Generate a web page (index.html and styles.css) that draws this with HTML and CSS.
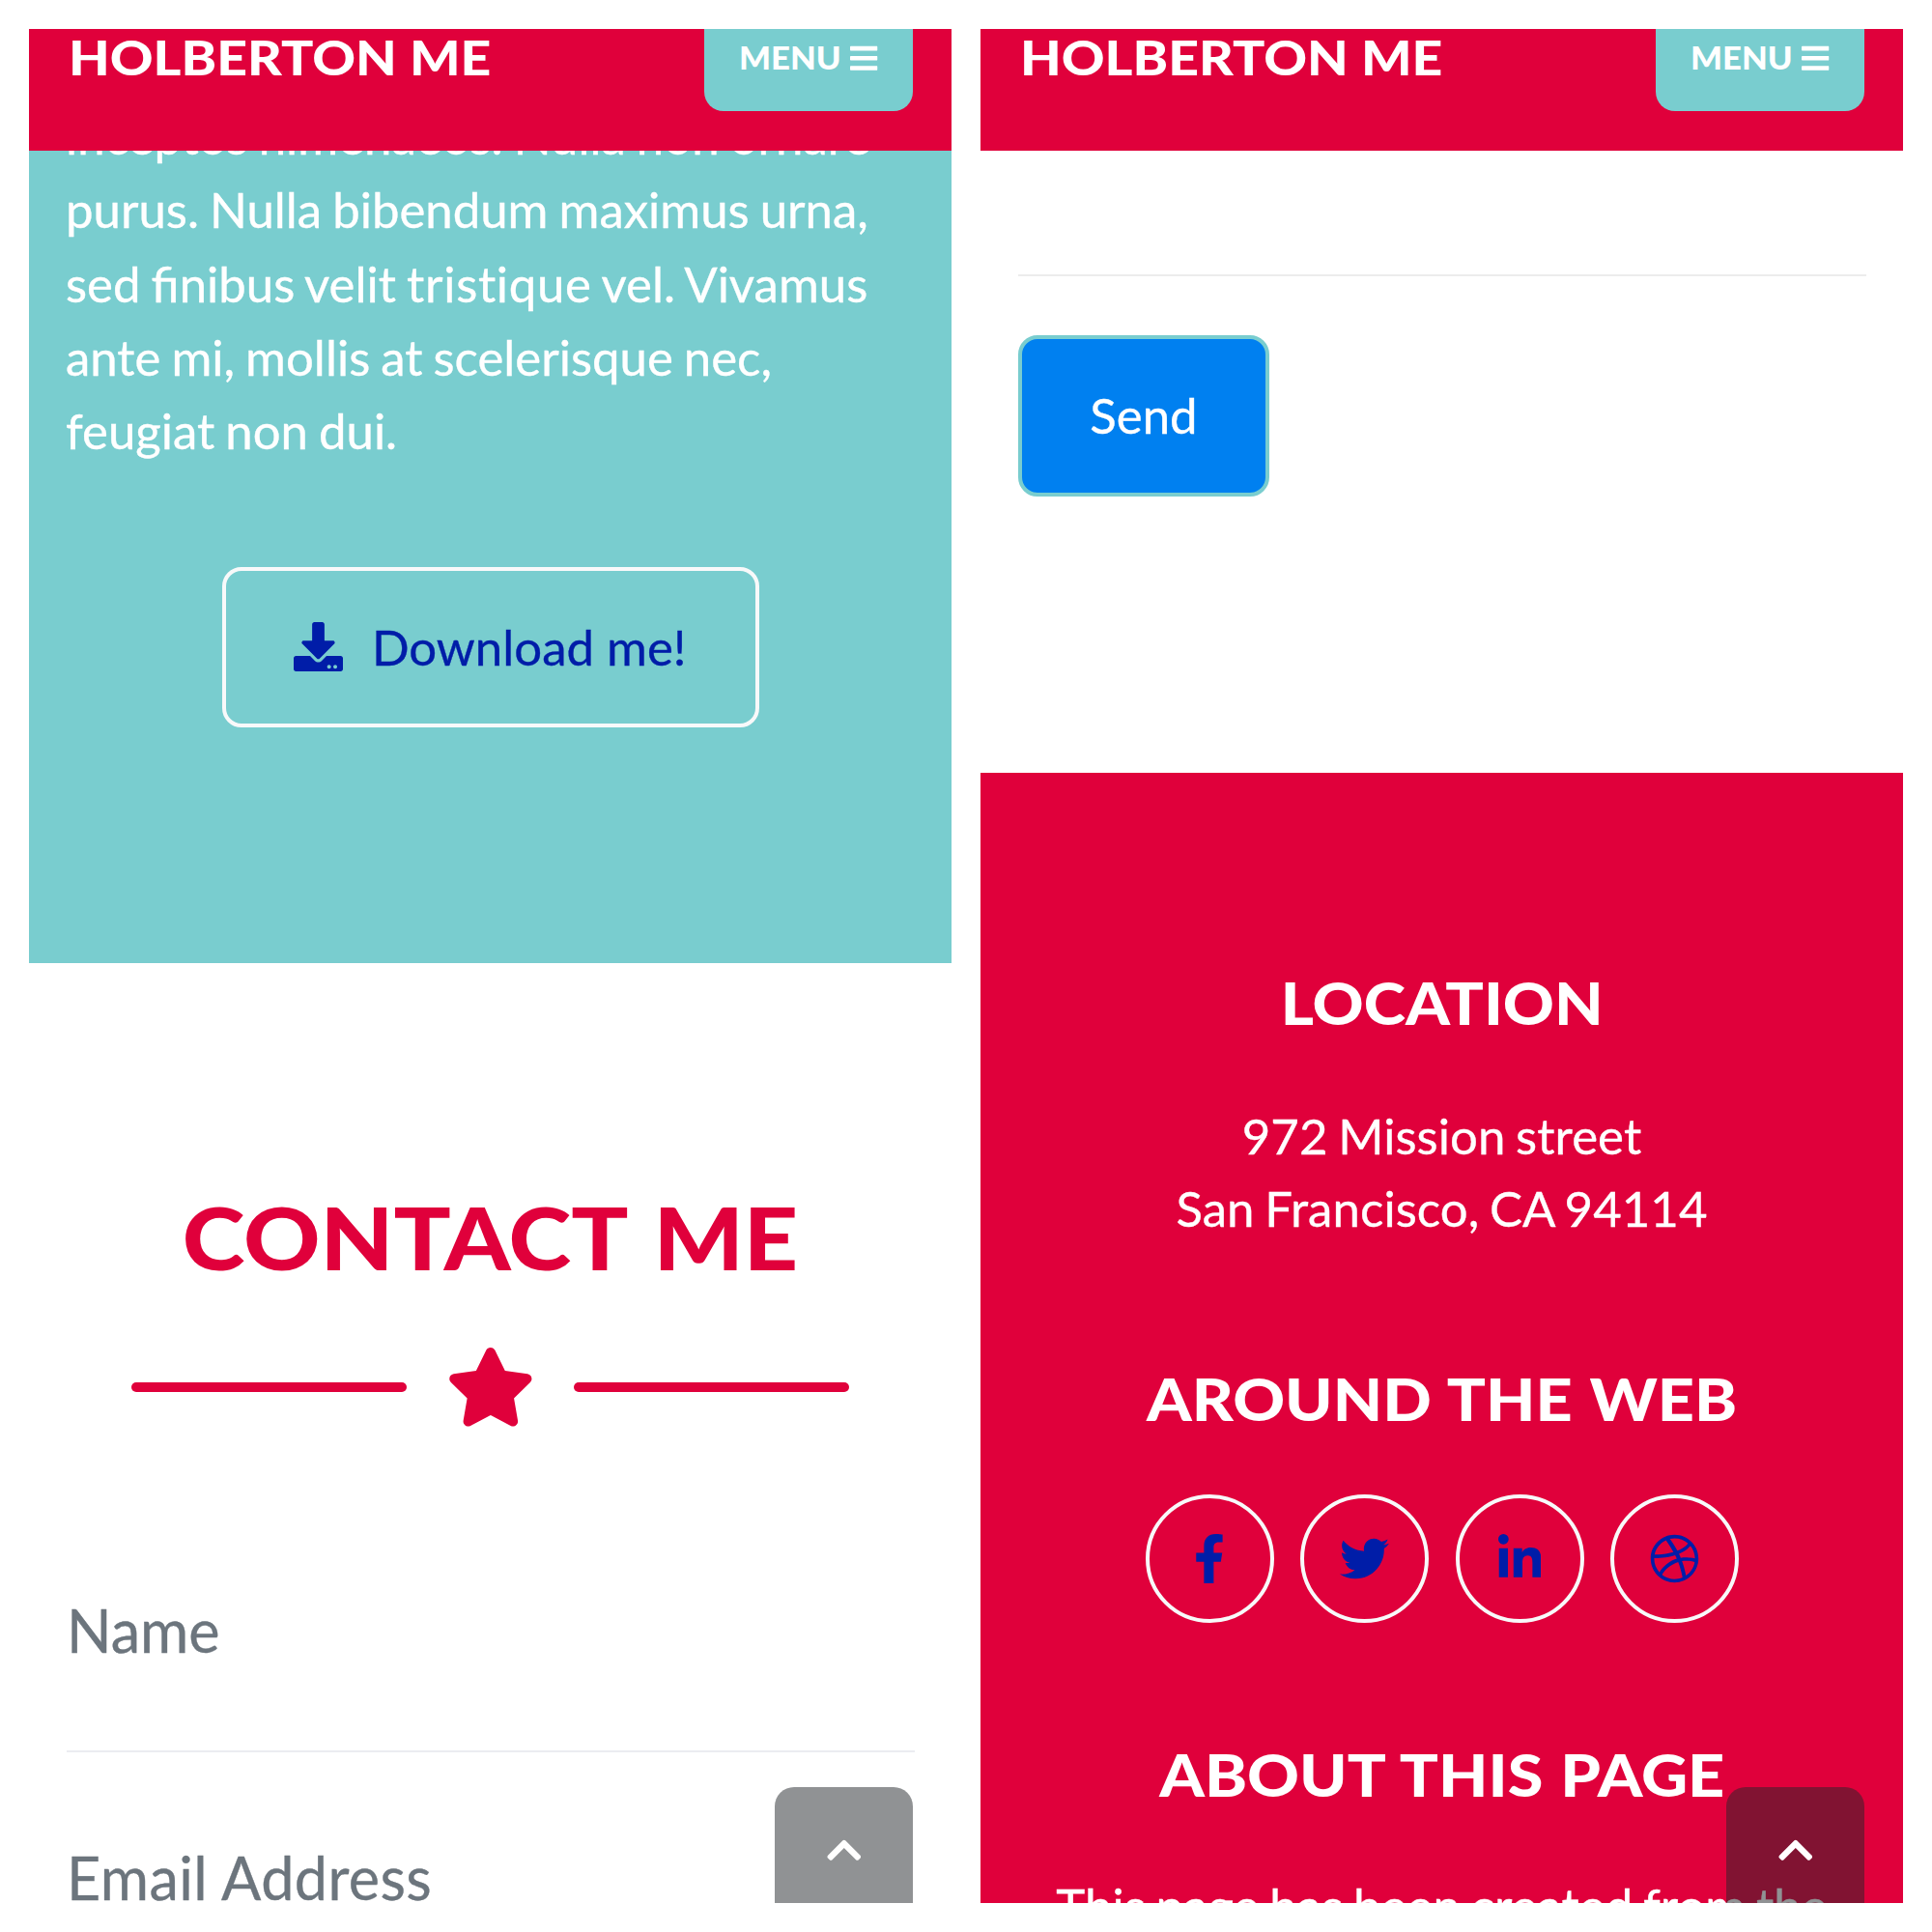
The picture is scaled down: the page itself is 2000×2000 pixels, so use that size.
FILE: index.html
```
<!DOCTYPE html>
<html lang="en">
<head>
<meta charset="utf-8">
<title>Holberton Me</title>
<link rel="stylesheet" href="styles.css">
</head>
<body>
<svg class="defs" aria-hidden="true">
  <symbol id="bars" viewBox="0 0 448 512"><path d="M16 132h416c8.8 0 16-7.2 16-16V76c0-8.8-7.2-16-16-16H16C7.2 60 0 67.200 0 76v40c0 8.800 7.200 16 16 16zm0 160h416c8.800 0 16-7.200 16-16v-40c0-8.800-7.200-16-16-16H16c-8.800 0-16 7.200-16 16v40c0 8.800 7.200 16 16 16zm0 160h416c8.800 0 16-7.200 16-16v-40c0-8.800-7.200-16-16-16H16c-8.800 0-16 7.200-16 16v40c0 8.800 7.200 16 16 16z"/></symbol>
  <symbol id="chevron" viewBox="0 0 448 512"><path d="M240.971 130.524l194.343 194.343c9.373 9.373 9.373 24.569 0 33.941l-22.667 22.667c-9.357 9.357-24.522 9.375-33.901.04L224 227.495 69.255 381.516c-9.379 9.335-24.544 9.317-33.901-.04l-22.667-22.667c-9.373-9.373-9.373-24.569 0-33.941L207.03 130.525c9.372-9.373 24.568-9.373 33.941-.001z"/></symbol>
</svg>
<main class="screens">
  <article class="screen">
    <header class="navbar">
      <a class="brand"><span>HOLBERTON ME</span></a>
      <button class="menu"><span>MENU</span><svg><use href="#bars"/></svg></button>
    </header>
    <section class="about">
      <p>inceptos himenaeos. Nulla non ornare<br>purus. Nulla bibendum maximus urna,<br>sed finibus velit <span class="no-liga">tristique</span> vel. Vivamus<br>ante mi, mollis at scelerisque nec,<br>feugiat non dui.</p>
      <a class="download">
        <svg viewBox="0 0 512 512"><path d="M216 0h80c13.3 0 24 10.700 24 24v168h87.700c17.800 0 26.700 21.500 14.100 34.100L269.700 378.300c-7.500 7.500-19.800 7.500-27.300 0L90.100 226.100c-12.600-12.600-3.700-34.100 14.100-34.100H192V24c0-13.300 10.700-24 24-24zm296 376v112c0 13.300-10.700 24-24 24H24c-13.300 0-24-10.700-24-24V376c0-13.300 10.700-24 24-24h146.700l49 49c20.100 20.100 52.500 20.100 72.600 0l49-49H488c13.300 0 24 10.700 24 24zm-124 88c0-11-9-20-20-20s-20 9-20 20 9 20 20 20 20-9 20-20zm64 0c0-11-9-20-20-20s-20 9-20 20 9 20 20 20 20-9 20-20z"/></svg>
        <span>Download me!</span>
      </a>
    </section>
    <section class="contact">
      <h2><span>CONTACT ME</span></h2>
      <div class="divider">
        <i></i>
        <svg viewBox="0 0 576 512"><path d="M259.300 17.800L194 150.200 47.900 171.500c-26.200 3.800-36.700 36.100-17.700 54.600l105.700 103-25 145.500c-4.500 26.300 23.200 46 46.400 33.700L288 439.600l130.700 68.700c23.200 12.200 50.900-7.400 46.400-33.700l-25-145.500 105.700-103c19-18.500 8.500-50.800-17.700-54.600L382 150.200 316.700 17.800c-11.700-23.600-45.600-23.900-57.400 0z"/></svg>
        <i></i>
      </div>
      <div class="field name">Name</div>
      <div class="field email">Email Address</div>
    </section>
    <a class="to-top"><svg><use href="#chevron"/></svg></a>
  </article>

  <article class="screen">
    <header class="navbar">
      <a class="brand"><span>HOLBERTON ME</span></a>
      <button class="menu"><span>MENU</span><svg><use href="#bars"/></svg></button>
    </header>
    <section class="form-end">
      <hr>
      <button class="send">Send</button>
    </section>
    <footer class="footer">
      <h4><span class="h-location">LOCATION</span></h4>
      <p>972 Mission street<br>San Francisco, CA 94114</p>
      <h4 class="web"><span>AROUND THE WEB</span></h4>
      <div class="social">
        <a><svg viewBox="0 0 320 512"><path d="M279.140 288l14.220-92.660h-88.910v-60.130c0-25.350 12.420-50.060 52.240-50.060h40.420V6.260S260.430 0 225.360 0c-73.220 0-121.080 44.380-121.080 124.720v70.620H22.890V288h81.390v224h100.170V288z"/></svg></a>
        <a><svg viewBox="0 0 512 512"><path d="M459.370 151.716c.325 4.548.325 9.097.325 13.645 0 138.720-105.583 298.558-298.558 298.558-59.452 0-114.680-17.219-161.137-47.106 8.447.974 16.568 1.299 25.340 1.299 49.055 0 94.213-16.568 130.274-44.832-46.132-.975-84.792-31.188-98.112-72.772 6.498.974 12.995 1.624 19.818 1.624 9.421 0 18.843-1.300 27.614-3.573-48.081-9.747-84.143-51.980-84.143-102.985v-1.299c13.969 7.797 30.214 12.670 47.431 13.319-28.264-18.843-46.781-51.005-46.781-87.391 0-19.492 5.197-37.360 14.294-52.954 51.655 63.675 129.300 105.258 216.365 109.807-1.624-7.797-2.599-15.918-2.599-24.040 0-57.828 46.782-104.934 104.934-104.934 30.213 0 57.502 12.670 76.670 33.137 23.715-4.548 46.456-13.320 66.599-25.340-7.798 24.366-24.366 44.833-46.132 57.827 21.117-2.273 41.584-8.122 60.426-16.243-14.292 20.791-32.161 39.308-52.628 54.253z"/></svg></a>
        <a><svg viewBox="0 0 448 512"><path d="M100.280 448H7.400V148.900h92.880zM53.790 108.100C24.090 108.100 0 83.500 0 53.800a53.790 53.790 0 0 1 107.580 0c0 29.700-24.100 54.300-53.790 54.300zM447.900 448h-92.680V302.400c0-34.700-.7-79.200-48.290-79.200-48.290 0-55.690 37.700-55.690 76.700V448h-92.780V148.900h89.080v40.800h1.300c12.400-23.500 42.690-48.300 87.880-48.300 94 0 111.280 61.900 111.280 142.300V448z"/></svg></a>
        <a><svg viewBox="0 0 512 512"><path d="M256 8C119.252 8 8 119.252 8 256s111.252 248 248 248 248-111.252 248-248S392.748 8 256 8zm163.970 114.366c29.503 36.046 47.369 81.957 47.835 131.955-6.984-1.477-77.018-15.682-147.502-6.818-5.752-14.041-11.181-26.393-18.617-41.614 78.321-31.977 113.818-77.482 118.284-83.523zM396.421 97.870c-3.810 5.427-35.697 48.286-111.021 76.519-34.712-63.776-73.185-116.168-79.040-124.008 67.176-16.193 137.966 1.270 190.061 47.489zm-230.480-33.250c5.585 7.659 43.438 60.116 78.537 122.509-99.087 26.313-186.360 25.934-195.834 25.809C62.380 147.205 106.678 92.573 165.941 64.620zM44.170 256.323c0-2.166.043-4.322.108-6.473 9.268.190 111.920 1.513 217.706-30.146 6.064 11.868 11.857 23.915 17.174 35.949-76.599 21.575-146.194 83.527-180.531 142.306C64.794 360.405 44.170 310.730 44.170 256.323zm81.807 167.113c22.127-45.233 82.178-103.622 167.579-132.756 29.740 77.283 42.039 142.053 45.189 160.638-68.112 29.013-150.015 21.053-212.768-27.882zm248.380 8.489c-2.171-12.886-13.446-74.897-41.152-151.033 66.380-10.626 124.700 6.768 131.947 9.055-9.442 58.941-43.273 109.844-90.795 141.978z"/></svg></a>
      </div>
      <h4 class="page"><span>ABOUT THIS PAGE</span></h4>
      <p class="credit">This page has been created from the</p>
    </footer>
    <a class="to-top"><svg><use href="#chevron"/></svg></a>
  </article>
</main>
</body>
</html>
```
FILE: styles.css
```
* { box-sizing: border-box; }

body {
  margin: 0;
  background: #fff;
  color: #fff;
  font: 400 50.93px/76.4px Lato, sans-serif;
}

h2, h4, p, hr { margin: 0; }
svg { display: block; fill: currentColor; flex: none; }
.defs { position: absolute; width: 0; height: 0; }

.screens {
  display: grid;
  grid-template-columns: 955px 955px;
  gap: 30px;
  height: 2000px;
  padding: 30px;
}

.screen {
  position: relative;
  height: 1940px;
  overflow: hidden;
}

/* Navigation bar */
.navbar {
  display: flex;
  justify-content: space-between;
  align-items: flex-start;
  height: 126px;
  padding: 0 40px 0 41px;
  background: #e0003b;
}

.brand, .menu, h2, h4 { font-weight: 900; }

.brand { font-size: 50px; line-height: 59px; }
.brand span { display: inline-block; transform: scaleX(1.106); transform-origin: left; }

.menu {
  display: flex;
  align-items: flex-start;
  gap: 17.6px;
  width: 216px;
  height: 85px;
  padding: 0 0 0 36px;
  border: 0;
  border-radius: 0 0 20px 20px;
  background: #79cdcf;
  color: #fff;
  font-family: inherit;
  font-size: 32px;
  line-height: 60px;
}
.menu span { transform: scaleX(1.085); transform-origin: left; }
.menu svg { width: 28.5px; height: 32.6px; margin-top: 14px; }

/* About */
.about {
  height: 840.5px;
  padding: 0 38px;
  overflow: hidden;
  background: #79cdcf;
  text-align: center;
}
.about p {
  margin-top: -53.3px;
  text-align: left;
  white-space: nowrap;
  word-spacing: -2px;
}
.no-liga { font-variant-ligatures: none; letter-spacing: .7px; }
.about p, .download span, .footer p, .field, .send { -webkit-text-stroke: .35px; }

.download {
  display: inline-flex;
  align-items: center;
  gap: 30px;
  width: 556px;
  height: 166px;
  margin-top: 102px;
  padding-left: 70.5px;
  border: 4px solid #f8f9fa;
  border-radius: 20px;
  color: #001da8;
  white-space: nowrap;
}
.download svg { width: 51px; height: 51px; }

/* Contact */
.contact { padding: 234.5px 38px 0 38px; color: #e0003b; }
h2 { font-size: 89.5px; line-height: 100px; text-align: center; }
h2 span, h4 span { display: inline-block; transform: scaleX(1.097); }
h2 span { word-spacing: 5px; }

.divider {
  display: flex;
  justify-content: center;
  align-items: center;
  gap: 41px;
  margin-top: 64px;
}
.divider i { width: 285px; height: 10px; border-radius: 5px; background: currentColor; }
.divider svg { width: 91.7px; height: 81.5px; }

.field { margin-left: 1px; font-size: 61.1px; line-height: 92px; color: #6c757d; }
.name { height: 172px; margin-top: 165px; border-bottom: 2px solid #ebecf1; }
.email { margin-top: 84px; letter-spacing: .4px; }

/* Form end */
.form-end { height: 644px; padding: 128px 38px 0 39px; }
hr { height: 2px; border: 0; background: #ececec; }
.send {
  display: block;
  width: 260px;
  height: 167px;
  margin-top: 61px;
  padding: 0 0 1px;
  border: 4px solid #79cdcf;
  border-radius: 20px;
  background: #0080f0;
  color: #fff;
  font: inherit;
}

/* Footer */
.footer {
  height: 1170px;
  padding-top: 202px;
  background: #e0003b;
  text-align: center;
  line-height: 75px;
}
h4 { font-size: 60px; line-height: 72px; }
h4 span { transform: scaleX(1.109); word-spacing: 2px; }
h4 .h-location { transform: scaleX(1.093); }
.footer p { margin-top: 64px; word-spacing: -2.5px; letter-spacing: .08px; }
.web { margin-top: 124px; }
.footer .credit { margin-top: 62px; }

.social { display: flex; justify-content: center; gap: 27.500px; margin-top: 63px; padding-left: .5px; }
.social a {
  display: flex;
  align-items: center;
  justify-content: center;
  width: 133px;
  height: 133px;
  border: 4px solid #f8f9fa;
  border-radius: 50%;
  color: #001da8;
}
.social svg { height: 51px; }
.page { margin-top: 121px; }

/* Scroll-to-top button, pinned over the page */
.to-top {
  position: absolute;
  right: 40px;
  bottom: 0;
  display: flex;
  justify-content: center;
  width: 143px;
  height: 120px;
  padding-top: 44.500px;
  border-radius: 20px 20px 0 0;
  background: rgba(33, 37, 41, .5);
}
.to-top svg { width: 35.600px; height: 40.700px; }
```
